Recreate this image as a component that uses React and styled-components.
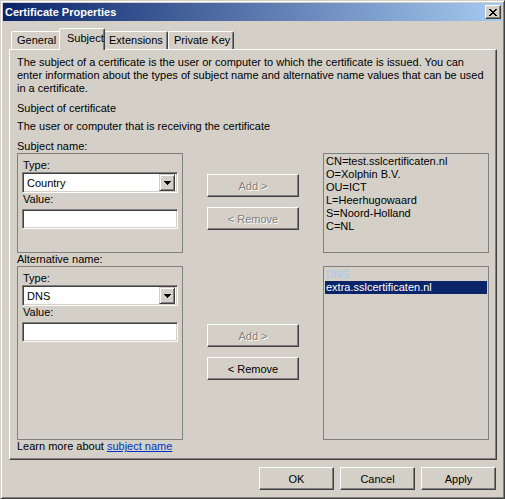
import React from "react";
import styled, { createGlobalStyle } from "styled-components";

const GlobalStyle = createGlobalStyle`
  html, body {
    margin: 0;
    padding: 0;
    background: #d4d0c8;
  }
  body {
    font-family: "Liberation Sans", Arial, sans-serif;
    font-size: 11px;
    color: #000;
  }
  * {
    box-sizing: border-box;
  }
`;

const Window = styled.div`
  width: 505px;
  height: 499px;
  display: flex;
  flex-direction: column;
  background: #d4d0c8;
  border: 1px solid;
  border-color: #d4d0c8 #404040 #404040 #d4d0c8;
  box-shadow: inset 1px 1px #fff, inset -1px -1px #808080;
  padding: 2px;
`;

const TitleBar = styled.div`
  height: 18px;
  display: flex;
  align-items: center;
  justify-content: space-between;
  padding: 0 1px 0 2px;
  background: linear-gradient(to right, #0a246a, #a6caf0);
  color: #fff;
  font-weight: bold;
  font-size: 11px;
`;

const CloseButton = styled.div`
  width: 16px;
  height: 14px;
  display: flex;
  align-items: center;
  justify-content: center;
  background: #d4d0c8;
  border: 1px solid;
  border-color: #fff #404040 #404040 #fff;
  box-shadow: inset -1px -1px #808080;
`;

const Body = styled.div`
  flex: 1;
  display: flex;
  flex-direction: column;
  padding: 7px 5px 6px 6px;
`;

const TabStrip = styled.div`
  height: 21px;
  display: flex;
  align-items: flex-end;
  padding-left: 2px;
`;

const Tab = styled.div`
  position: relative;
  z-index: ${(p) => (p.$active ? 2 : 1)};
  width: ${(p) => p.$w}px;
  height: ${(p) => (p.$active ? 22 : 18)}px;
  margin: 0 ${(p) => (p.$active ? -2 : 0)}px ${(p) => (p.$active ? -1 : 0)}px;
  padding: ${(p) => (p.$active ? 3 : 2)}px 0 0 ${(p) => (p.$active ? 7 : 5)}px;
  line-height: 13px;
  white-space: nowrap;
  background: #d4d0c8;
  border-top: 1px solid #fff;
  border-left: 1px solid #fff;
  border-right: 1px solid #404040;
  border-radius: 2px 2px 0 0;
  box-shadow: inset -1px 0 #808080;
`;

const Panel = styled.div`
  flex: 1;
  display: flex;
  flex-direction: column;
  border: 1px solid;
  border-color: #fff #404040 #404040 #fff;
  box-shadow: inset -1px -1px #808080;
  padding: 6px 7px 0 7px;
`;

const Text = styled.p`
  margin: ${(p) => p.$top || 0}px 0 0;
  line-height: 13px;
  white-space: nowrap;
`;

const Section = styled.div`
  display: grid;
  grid-template-columns: 166px 92px 166px;
  grid-template-rows: 13px ${(p) => p.$h}px;
  column-gap: 24px;
  margin-top: ${(p) => p.$top || 0}px;
`;

const SectionLabel = styled.div`
  grid-column: 1 / span 3;
  line-height: 13px;
`;

const GroupBox = styled.div`
  border: 1px solid #808080;
  padding: 5px 4px 0;
`;

const FieldLabel = styled.div`
  line-height: 13px;
  padding-left: 1px;
`;

const sunken = `
  border: 1px solid;
  border-color: #808080 #fff #fff #808080;
  box-shadow: inset 1px 1px #404040, inset -1px -1px #d4d0c8;
  background: #fff;
`;

const Select = styled.div`
  ${sunken}
  height: 21px;
  display: flex;
  align-items: center;
  justify-content: space-between;
  padding: 2px;
`;

const SelectValue = styled.span`
  padding-left: 2px;
`;

const DropButton = styled.div`
  width: 16px;
  height: 17px;
  display: flex;
  align-items: center;
  justify-content: center;
  background: #d4d0c8;
  border: 1px solid;
  border-color: #d4d0c8 #404040 #404040 #d4d0c8;
  box-shadow: inset 1px 1px #fff, inset -1px -1px #808080;
`;

const Input = styled.div`
  ${sunken}
  height: 20px;
  margin-top: 3px;
`;

const ButtonColumn = styled.div`
  display: flex;
  flex-direction: column;
  gap: 10px;
  padding-top: ${(p) => p.$top}px;
`;

const Button = styled.button`
  width: ${(p) => p.$w}px;
  height: 23px;
  padding: 0;
  font-family: inherit;
  font-size: 11px;
  background: #d4d0c8;
  color: ${(p) => (p.disabled ? "#808080" : "#000")};
  text-shadow: ${(p) => (p.disabled ? "1px 1px 0 #fff" : "none")};
  border: 1px solid;
  border-color: #fff #404040 #404040 #fff;
  box-shadow: inset -1px -1px #808080;
`;

const List = styled.div`
  border: 1px solid #808080;
  padding: 1px;
`;

const ListItem = styled.div`
  line-height: 13px;
  padding-left: 1px;
  white-space: nowrap;
  color: ${(p) => (p.$selected ? "#fff" : p.$faded ? "#a6caf0" : "#000")};
  background: ${(p) => (p.$selected ? "#0a246a" : "transparent")};
`;

const Link = styled.a`
  color: #0033cc;
  text-decoration: underline;
`;

const Footer = styled.div`
  display: flex;
  justify-content: flex-end;
  gap: 6px;
  margin-top: 7px;
  padding-right: 1px;
`;

const CloseIcon = () => (
  <svg width="8" height="7" viewBox="0 0 8 7">
    <path
      fill="#000"
      d="M0 0h2v1H0z M6 0h2v1H6z M1 1h2v1H1z M5 1h2v1H5z M2 2h4v1H2z M3 3h2v1H3z M2 4h4v1H2z M1 5h2v1H1z M5 5h2v1H5z M0 6h2v1H0z M6 6h2v1H6z"
    />
  </svg>
);

const ArrowIcon = () => (
  <svg width="7" height="4" viewBox="0 0 7 4">
    <path fill="#000" d="M0 0h7v1H0z M1 1h5v1H1z M2 2h3v1H2z M3 3h1v1H3z" />
  </svg>
);

const NameSection = ({ label, type, height, buttonTop, removeEnabled, children, top }) => (
  <Section $h={height} $top={top}>
    <SectionLabel>{label}</SectionLabel>
    <GroupBox>
      <FieldLabel>Type:</FieldLabel>
      <Select>
        <SelectValue>{type}</SelectValue>
        <DropButton>
          <ArrowIcon />
        </DropButton>
      </Select>
      <FieldLabel>Value:</FieldLabel>
      <Input />
    </GroupBox>
    <ButtonColumn $top={buttonTop}>
      <Button $w={92} disabled>Add &gt;</Button>
      <Button $w={92} disabled={!removeEnabled}>&lt; Remove</Button>
    </ButtonColumn>
    <List>{children}</List>
  </Section>
);

const subjectLines = [
  "CN=test.sslcertificaten.nl",
  "O=Xolphin B.V.",
  "OU=ICT",
  "L=Heerhugowaard",
  "S=Noord-Holland",
  "C=NL",
];

export default function App() {
  return (
    <>
      <GlobalStyle />
      <Window>
        <TitleBar>
          <span>Certificate Properties</span>
          <CloseButton>
            <CloseIcon />
          </CloseButton>
        </TitleBar>
        <Body>
          <TabStrip>
            <Tab $w={50}>General</Tab>
            <Tab $w={46} $active>Subject</Tab>
            <Tab $w={65}>Extensions</Tab>
            <Tab $w={66}>Private Key</Tab>
          </TabStrip>
          <Panel>
            <Text>
              The subject of a certificate is the user or computer to which the certificate is issued. You can
              <br />
              enter information about the types of subject name and alternative name values that can be used
              <br />
              in a certificate.
            </Text>
            <Text $top={7}>Subject of certificate</Text>
            <Text $top={5}>The user or computer that is receiving the certificate</Text>
            <NameSection label="Subject name:" type="Country" height={100} buttonTop={21} top={7}>
              {subjectLines.map((l) => (
                <ListItem key={l}>{l}</ListItem>
              ))}
            </NameSection>
            <NameSection label="Alternative name:" type="DNS" height={174} buttonTop={58} removeEnabled>
              <ListItem $faded>DNS</ListItem>
              <ListItem $selected>extra.sslcertificaten.nl</ListItem>
            </NameSection>
            <Text>
              Learn more about <Link href="#">subject name</Link>
            </Text>
          </Panel>
          <Footer>
            <Button $w={75}>OK</Button>
            <Button $w={75}>Cancel</Button>
            <Button $w={75}>Apply</Button>
          </Footer>
        </Body>
      </Window>
    </>
  );
}
